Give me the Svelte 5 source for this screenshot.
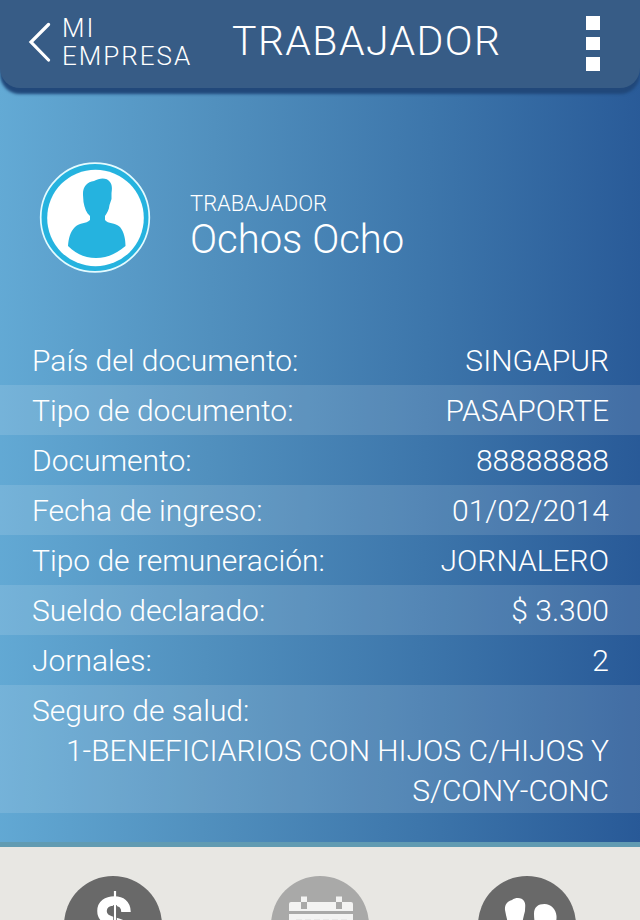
<script lang="ts">
  type Row = { label: string; value: string; stacked?: boolean };

  const worker = { role: 'TRABAJADOR', name: 'Ochos Ocho' };

  const rows: Row[] = [
    { label: 'País del documento:', value: 'SINGAPUR' },
    { label: 'Tipo de documento:', value: 'PASAPORTE' },
    { label: 'Documento:', value: '88888888' },
    { label: 'Fecha de ingreso:', value: '01/02/2014' },
    { label: 'Tipo de remuneración:', value: 'JORNALERO' },
    { label: 'Sueldo declarado:', value: '$ 3.300' },
    { label: 'Jornales:', value: '2' },
    { label: 'Seguro de salud:', value: '1-BENEFICIARIOS CON HIJOS C/HIJOS Y S/CONY-CONC', stacked: true },
  ];
</script>

<div class="screen">
  <header>
    <button class="back">
      <svg width="24" height="40" viewBox="0 0 24 40">
        <path d="M20.500 2.500 3 20 20.500 38" />
      </svg>
      <span>MI<br />EMPRESA</span>
    </button>
    <h1>TRABAJADOR</h1>
    <button class="more" aria-label="Más opciones">
      <i></i>
      <i></i>
      <i></i>
    </button>
  </header>

  <main>
    <section class="profile">
      <svg class="avatar" width="112" height="112" viewBox="0 0 112 112">
        <circle cx="56" cy="55.500" r="54.300" fill="#25b3df" stroke="#e4fbff" stroke-width="1.700" />
        <circle cx="56.500" cy="56" r="48.300" fill="#fff" />
        <path
          fill="#25b3df"
          d="M44 33C43.500 25 48 20 55 19C61 15.500 68 15.500 71 20C73.500 23 73 28 72.500 31V37L70.500 43C70 48 68 51 66 54V58C69 62 76 60.500 81 65C85 70 86.500 77 86.500 84C77 92 68 96 57 96C46 96 37 92 29 84C29.500 77 31 70 36 65C41 60.500 47 62 51 58V54C47.500 51 45.500 46 44.500 40Z"
        />
      </svg>
      <div class="who">
        <div class="role">{worker.role}</div>
        <div class="name">{worker.name}</div>
      </div>
    </section>

    <dl>
      {#each rows as row}
        <div class="row" class:stacked={row.stacked}>
          <dt>{row.label}</dt>
          <dd>{row.value}</dd>
        </div>
      {/each}
    </dl>
  </main>

  <nav>
    <button aria-label="Sueldo">
      <svg width="98" height="98" viewBox="0 0 98 98">
        <circle cx="49" cy="49" r="49" fill="#696969" />
        <path
          d="M62 36C62 28 57 25 50.500 25C43 25 38 28.500 38 35C38 50 63 42 63 57C63 65 57 69 50 69C42 69 37 65 37 57"
          fill="none"
          stroke="#fff"
          stroke-width="9.500"
        />
        <path d="M51 15V80" stroke="#fff" stroke-width="2.200" />
        <path d="M49.500 29V65M52.500 29V65" stroke="#696969" stroke-width="0.800" />
      </svg>
    </button>
    <button aria-label="Calendario">
      <svg width="98" height="98" viewBox="0 0 98 98">
        <circle cx="49" cy="49" r="49" fill="#a9a9a8" />
        <path fill="#f3f3f2" d="M20 26H80Q82 26 82 28V35H18V28Q18 26 20 26ZM18 38H82V78H18Z" />
        <path fill="#f3f3f2" d="M30 20.500H36V26H30ZM65 20.500H71V26H65Z" />
        <path fill="#a9a9a8" d="M30 26H36V33H30ZM65 26H71V33H65Z" />
        <path d="M25 44H76" stroke="#e7e7e6" stroke-width="2" stroke-dasharray="6 3" />
      </svg>
    </button>
    <button aria-label="Cargas familiares">
      <svg width="98" height="98" viewBox="0 0 98 98">
        <circle cx="49" cy="49" r="49" fill="#696969" />
        <path
          fill="#fff"
          d="M27 34C26.500 28 30 25 34 24C38 21 44 21.500 46 25C48 28 47 31 47 35C45.500 40 45 45 43 50C49 54 53 57 53 70H18C18 58 23 53 31 51C29.500 45 28 40 27 34Z"
        />
        <path
          fill="#fff"
          d="M56 38C56 31 60 28 66.500 28C73 28 78 33 78.500 40C79 48 75 53 71 55C78 58 83 61 83 72H57C57 64 55 58 59 53C57 49 56 44 56 38Z"
        />
      </svg>
    </button>
  </nav>
</div>

<style>
  :global(body) {
    margin: 0;
  }

  .screen {
    display: flex;
    flex-direction: column;
    height: 920px;
    overflow: hidden;
    color: #fff;
    font-family: Roboto, 'Open Sans', sans-serif;
    font-weight: 300;
    background: linear-gradient(91deg, #63aad5 0%, #5190be 33%, #3d76ab 66%, #285997 100%);
  }

  button {
    padding: 0;
    border: 0;
    background: none;
    color: inherit;
    font: inherit;
  }

  svg {
    display: block;
  }

  header {
    display: flex;
    flex: none;
    align-items: flex-start;
    box-sizing: border-box;
    height: 88px;
    padding: 14px 40px 0 28px;
    border-radius: 0 0 20px 20px;
    background: #375c86;
    box-shadow: 0 6px 3px #21487a;
  }

  .back {
    display: flex;
    width: 204px;
    gap: 10px;
    text-align: left;
    font-size: 26px;
    font-weight: 350;
    line-height: 28px;
    letter-spacing: 2px;
  }

  .back svg {
    margin-top: 8px;
  }

  .back path {
    fill: none;
    stroke: #fff;
    stroke-width: 3.2;
    stroke-linecap: round;
  }

  h1 {
    flex: 1;
    margin: 3px 0 0;
    font-size: 41px;
    font-weight: 300;
    line-height: 48px;
    letter-spacing: 1.4px;
  }

  .more {
    display: flex;
    flex-direction: column;
    gap: 7px;
    padding-top: 2px;
  }

  .more i {
    width: 14px;
    height: 13.5px;
    background: #fff;
  }

  main {
    display: flex;
    flex: none;
    flex-direction: column;
    box-sizing: border-box;
    height: 759px;
    border-bottom: 5px solid #619bb2;
  }

  .profile {
    display: flex;
    gap: 39px;
    height: 173px;
    padding: 74px 0 0 39px;
  }

  .role {
    margin-top: 29px;
    font-size: 22px;
    line-height: 26px;
  }

  .name {
    font-size: 40px;
    line-height: 46px;
  }

  dl {
    margin: 0;
    font-size: 30px;
    line-height: 48px;
  }

  .row {
    display: flex;
    justify-content: space-between;
    padding: 2px 31px 0 32px;
  }

  .row:nth-child(even) {
    background: rgb(255 255 255 / 12%);
  }

  dd {
    margin: 0;
    text-align: right;
  }

  .stacked {
    display: block;
    padding-bottom: 2px;
  }

  .stacked dt {
    margin-bottom: -4px;
  }

  .stacked dd {
    line-height: 40px;
  }

  nav {
    display: flex;
    flex: 1;
    justify-content: space-between;
    align-items: flex-start;
    min-height: 0;
    padding: 29px 64px 0;
    background: #e8e7e3;
  }
</style>
